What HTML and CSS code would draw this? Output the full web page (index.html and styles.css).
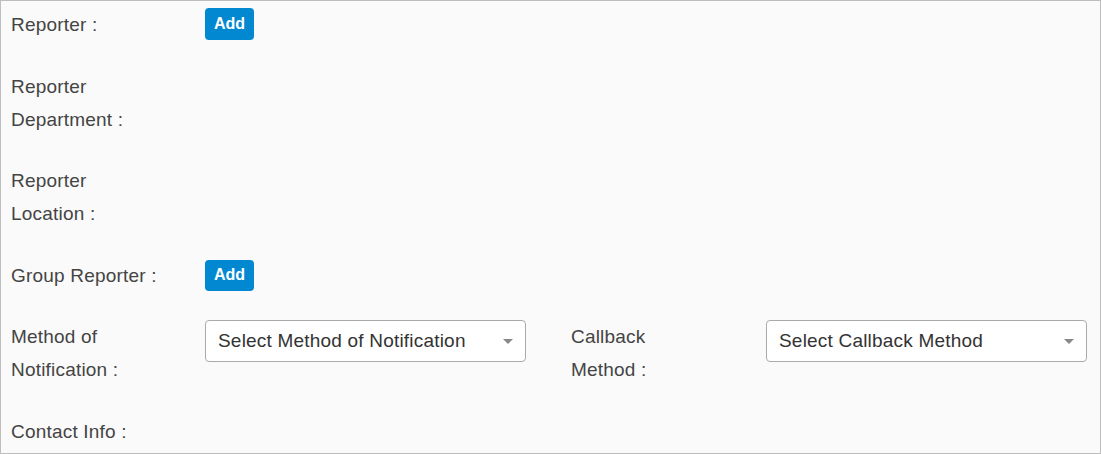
FILE: index.html
```html
<!DOCTYPE html>
<html>
  <head>
    <title>Reporter Details</title>
    <link rel="stylesheet" href="styles.css">
  </head>
  <body>
    <div class="panel">
      <div class="row first">
        <label class="label">Reporter :</label>
        <button class="btn-add">Add</button>
      </div>

      <div class="row">
        <label class="label">Reporter<br>Department :</label>
      </div>

      <div class="row">
        <label class="label">Reporter<br>Location :</label>
      </div>

      <div class="row">
        <label class="label">Group Reporter :</label>
        <button class="btn-add">Add</button>
      </div>

      <div class="row">
        <label class="label">Method of<br>Notification :</label>
        <div class="select">
          <span>Select Method of Notification</span>
          <svg class="caret" width="10" height="5" viewBox="0 0 10 5"><path d="M0 0h10L5 5z" fill="#888"/></svg>
        </div>
        <label class="label second">Callback<br>Method :</label>
        <div class="select">
          <span>Select Callback Method</span>
          <svg class="caret" width="10" height="5" viewBox="0 0 10 5"><path d="M0 0h10L5 5z" fill="#888"/></svg>
        </div>
      </div>

      <div class="row">
        <label class="label">Contact Info :</label>
      </div>
    </div>
  </body>
</html>
```

FILE: styles.css
```css
* {
  box-sizing: border-box;
  margin: 0;
  padding: 0;
}

body {
  font-family: "Liberation Sans", Arial, sans-serif;
  background: #ffffff;
}

.panel {
  width: 1101px;
  height: 454px;
  border: 1px solid #bdbdbd;
  background: #fafafa;
  padding: 4px 10px 0 10px;
  overflow: hidden;
}

.row {
  display: flex;
  align-items: center;
  margin-bottom: 28.5px;
}

.row.first {
  align-items: flex-start;
}

.label {
  width: 194px;
  flex-shrink: 0;
  font-size: 19px;
  letter-spacing: 0.2px;
  line-height: 33px;
  color: #444444;
  align-self: flex-start;
}

.row.first .label {
  margin-top: 3px;
}

.label.second {
  width: 195px;
  margin-left: 45px;
}

.btn-add {
  height: 31px;
  padding: 0 9px;
  background-color: #0288d1;
  color: #ffffff;
  border: none;
  border-radius: 4px;
  font-family: "Liberation Sans", Arial, sans-serif;
  font-size: 16px;
  font-weight: bold;
  cursor: pointer;
}

.row.first .btn-add {
  height: 32px;
  margin-top: 3px;
}

.select {
  width: 321px;
  height: 42px;
  align-self: flex-start;
  display: flex;
  align-items: center;
  justify-content: space-between;
  padding: 0 12px 0 12px;
  border: 1px solid #aaaaaa;
  border-radius: 4px;
  background: #ffffff;
  font-size: 19px;
  letter-spacing: 0.2px;
  color: #333333;
}

.caret {
  flex-shrink: 0;
}
```
